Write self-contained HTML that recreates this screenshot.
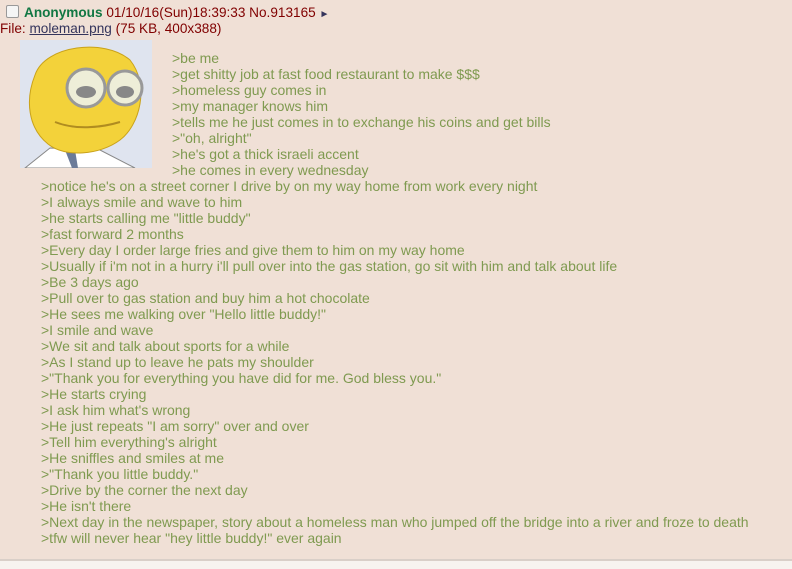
<!DOCTYPE html>
<html><head><meta charset="utf-8"><style>
html,body{margin:0;padding:0;width:792px;height:567px;overflow:hidden;background:#f0e0d6;font-family:"Liberation Sans",Arial,sans-serif;}
.bot{position:absolute;left:0;top:559px;width:792px;height:8px;background:#f7f3ef;border-top:2px solid #d9cfc8;}
.hdr{position:absolute;left:6px;top:5px;font-size:13.6px;color:#333;white-space:nowrap;}
.cb{display:inline-block;width:11px;height:11px;border:1px solid #999;border-radius:2px;background:#f5f5f5;vertical-align:-1px;margin-right:5px;}
.name{color:#117743;font-weight:bold;}
.file{position:absolute;left:0;top:21px;font-size:13.6px;color:#800000;white-space:nowrap;}
.file a{color:#34345c;text-decoration:underline;}
.thumb{position:absolute;left:20px;top:40px;width:132px;height:128px;background:#dfe4ef;overflow:hidden;}
.t{position:absolute;font-size:14px;line-height:16px;color:#7f9a50;white-space:nowrap;}
</style></head><body>
<div class="hdr"><span class="cb"></span><span class="name">Anonymous</span> <span style="color:#800000">01/10/16(Sun)18:39:33 No.913165</span> <span style="color:#34345c;font-size:10px">&#9658;</span></div>
<div class="file">File: <a>moleman.png</a> (75 KB, 400x388)</div>
<div class="thumb"><svg width="132" height="128" viewBox="0 0 132 128">
<path d="M5 128 L30 108 L80 110 L115 128Z" fill="#fff" stroke="#888"/>
<path d="M45 110 L52 128 L58 128 L55 110Z" fill="#6b7b99"/>
<path d="M15 35 C25 5 85 -2 110 20 C130 45 120 85 100 100 C80 115 45 118 28 104 C8 88 5 60 15 35Z" fill="#f3d23a" stroke="#c9a21a"/>
<circle cx="66" cy="48" r="19" fill="#eeeed8" stroke="#999" stroke-width="3"/>
<circle cx="105" cy="48" r="17" fill="#eeeed8" stroke="#999" stroke-width="3"/>
<ellipse cx="66" cy="52" rx="10" ry="6" fill="#888"/>
<ellipse cx="105" cy="52" rx="9" ry="6" fill="#888"/>
<path d="M35 82 C55 90 80 88 100 82" stroke="#b08c20" stroke-width="2" fill="none"/>
</svg></div>
<div class="t" style="left:172px;top:50px">&gt;be me<br>&gt;get shitty job at fast food restaurant to make $$$<br>&gt;homeless guy comes in<br>&gt;my manager knows him<br>&gt;tells me he just comes in to exchange his coins and get bills<br>&gt;"oh, alright"<br>&gt;he's got a thick israeli accent<br>&gt;he comes in every wednesday</div>
<div class="t" style="left:41px;top:178px">&gt;notice he's on a street corner I drive by on my way home from work every night<br>&gt;I always smile and wave to him<br>&gt;he starts calling me "little buddy"<br>&gt;fast forward 2 months<br>&gt;Every day I order large fries and give them to him on my way home<br>&gt;Usually if i'm not in a hurry i'll pull over into the gas station, go sit with him and talk about life<br>&gt;Be 3 days ago<br>&gt;Pull over to gas station and buy him a hot chocolate<br>&gt;He sees me walking over "Hello little buddy!"<br>&gt;I smile and wave<br>&gt;We sit and talk about sports for a while<br>&gt;As I stand up to leave he pats my shoulder<br>&gt;"Thank you for everything you have did for me. God bless you."<br>&gt;He starts crying<br>&gt;I ask him what's wrong<br>&gt;He just repeats "I am sorry" over and over<br>&gt;Tell him everything's alright<br>&gt;He sniffles and smiles at me<br>&gt;"Thank you little buddy."<br>&gt;Drive by the corner the next day<br>&gt;He isn't there<br>&gt;Next day in the newspaper, story about a homeless man who jumped off the bridge into a river and froze to death<br>&gt;tfw will never hear "hey little buddy!" ever again</div>
<div class="bot"></div>
</body></html>
